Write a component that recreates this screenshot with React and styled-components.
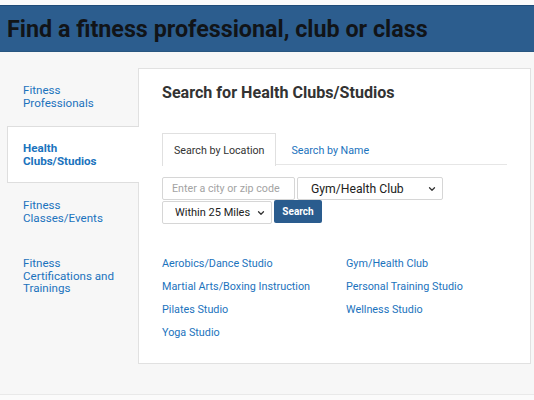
import React from "react";
import styled, { createGlobalStyle } from "styled-components";
import { ChevronDown } from "lucide-react";

const Global = createGlobalStyle`
  html, body { margin: 0; padding: 0; background: #ffffff; }
  body { font-family: Roboto, "Liberation Sans", Arial, sans-serif; }
  * { box-sizing: border-box; }
`;

const Page = styled.div`
  width: 534px;
  height: 400px;
  overflow: hidden;
  padding-top: 5px;
  background: #fbfbfb;
`;

const Header = styled.header`
  height: 47px;
  background: #2c5d8e;
  border-top: 1px solid #1f4b78;
  border-bottom: 1px solid #285680;
  display: flex;
  align-items: center;
  padding-left: 7px;
`;

const Title = styled.h1`
  margin: 0;
  font-size: 23.3px;
  font-weight: 700;
  color: #111418;
  letter-spacing: 0;
`;

const Body = styled.main`
  display: flex;
  background: #f7f7f7;
  padding: 16px 3px 30px 7px;
  border-bottom: 1px solid #e9e9e9;
`;

const Sidebar = styled.nav`
  width: 131px;
  flex-shrink: 0;
  display: flex;
  flex-direction: column;
`;

const SideTab = styled.a`
  display: block;
  height: ${(p) => (p.$active ? "57px" : "58px")};
  padding: ${(p) => (p.$active ? "15px 12px 0 15px" : "16px 12px 0 16px")};
  font-size: 11.6px;
  line-height: 12.5px;
  color: #1b73bd;
  font-weight: ${(p) => (p.$active ? 700 : 400)};
  text-decoration: none;
  background: ${(p) => (p.$active ? "#ffffff" : "transparent")};
  border: ${(p) => (p.$active ? "1px solid #dedede" : "none")};
  border-right: none;
  margin-right: ${(p) => (p.$active ? "-1px" : "0")};
  position: relative;
  z-index: 1;
`;

const Panel = styled.section`
  flex: 1;
  background: #ffffff;
  border: 1px solid #e1e1e1;
  padding: 14px 23px 19px 23px;
`;

const Heading = styled.h2`
  margin: 0;
  font-size: 16.1px;
  line-height: 20px;
  font-weight: 700;
  color: #333333;
`;

const TabList = styled.div`
  margin-top: 30px;
  display: flex;
  height: 32px;
  border-bottom: 1px solid #e6e6e6;
`;

const Tab = styled.div`
  height: 33px;
  padding: 0 11px;
  display: flex;
  align-items: center;
  font-size: 10.7px;
  color: ${(p) => (p.$active ? "#333333" : "#1b73bd")};
  background: ${(p) => (p.$active ? "#ffffff" : "transparent")};
  border: ${(p) => (p.$active ? "1px solid #e0e0e0" : "1px solid transparent")};
  border-bottom: none;
  margin-bottom: -1px;
  margin-right: 3px;
`;

const Form = styled.div`
  margin-top: 12px;
  display: flex;
  flex-direction: column;
  gap: 1px;
`;

const FormRow = styled.div`
  display: flex;
  gap: 2px;
`;

const TextInput = styled.input`
  width: 133px;
  height: 23px;
  border: 1px solid #d6d6d6;
  border-radius: 2px;
  padding: 0 9px;
  font-family: inherit;
  font-size: 10.7px;
  color: #333;
  outline: none;
  &::placeholder { color: #a3a3a3; }
`;

const SelectWrap = styled.div`
  position: relative;
  width: ${(p) => p.$w}px;
  height: 23px;
`;

const Select = styled.select`
  appearance: none;
  -webkit-appearance: none;
  width: 100%;
  height: 100%;
  border: 1px solid #d6d6d6;
  border-radius: 2px;
  background: #ffffff;
  padding: 0 0 0 ${(p) => p.$pl}px;
  font-family: inherit;
  font-size: ${(p) => p.$fs}px;
  color: #222;
  outline: none;
`;

const Chevron = styled(ChevronDown)`
  position: absolute;
  right: 6px;
  top: 7px;
  pointer-events: none;
  color: #333;
`;

const Button = styled.button`
  width: 48px;
  height: 23px;
  border: none;
  border-radius: 2px;
  background: #2a5c8e;
  color: #ffffff;
  font-family: inherit;
  font-size: 10px;
  font-weight: 700;
  padding: 0;
  margin-top: -1px;
`;

const Links = styled.div`
  margin-top: 28px;
  display: grid;
  grid-template-columns: 184px 1fr;
  grid-auto-rows: 23px;
`;

const LinkItem = styled.a`
  font-size: 10.8px;
  line-height: 23px;
  color: #1b73bd;
  text-decoration: none;
  white-space: nowrap;
`;

const sideItems = [
  ["Fitness", "Professionals"],
  ["Health", "Clubs/Studios"],
  ["Fitness", "Classes/Events"],
  ["Fitness", "Certifications and", "Trainings"],
];

const links = [
  "Aerobics/Dance Studio",
  "Gym/Health Club",
  "Martial Arts/Boxing Instruction",
  "Personal Training Studio",
  "Pilates Studio",
  "Wellness Studio",
  "Yoga Studio",
];

export default function App() {
  return (
    <Page>
      <Global />
      <Header>
        <Title>Find a fitness professional, club or class</Title>
      </Header>
      <Body>
        <Sidebar>
          {sideItems.map((lines, i) => (
            <SideTab key={i} $active={i === 1} href="#">
              {lines.map((l, j) => (
                <React.Fragment key={j}>
                  {l}
                  {j < lines.length - 1 && <br />}
                </React.Fragment>
              ))}
            </SideTab>
          ))}
        </Sidebar>
        <Panel>
          <Heading>Search for Health Clubs/Studios</Heading>
          <TabList>
            <Tab $active>Search by Location</Tab>
            <Tab>Search by Name</Tab>
          </TabList>
          <Form>
            <FormRow>
              <TextInput placeholder="Enter a city or zip code" />
              <SelectWrap $w={146}>
                <Select $pl={13} $fs={12.2} defaultValue="gym">
                  <option value="gym">Gym/Health Club</option>
                </Select>
                <Chevron size={10} strokeWidth={3} />
              </SelectWrap>
            </FormRow>
            <FormRow>
              <SelectWrap $w={110}>
                <Select $pl={12} $fs={11} defaultValue="25">
                  <option value="25">Within 25 Miles</option>
                </Select>
                <Chevron size={10} strokeWidth={3} />
              </SelectWrap>
              <Button>Search</Button>
            </FormRow>
          </Form>
          <Links>
            {links.map((l) => (
              <LinkItem key={l} href="#">
                {l}
              </LinkItem>
            ))}
          </Links>
        </Panel>
      </Body>
    </Page>
  );
}
